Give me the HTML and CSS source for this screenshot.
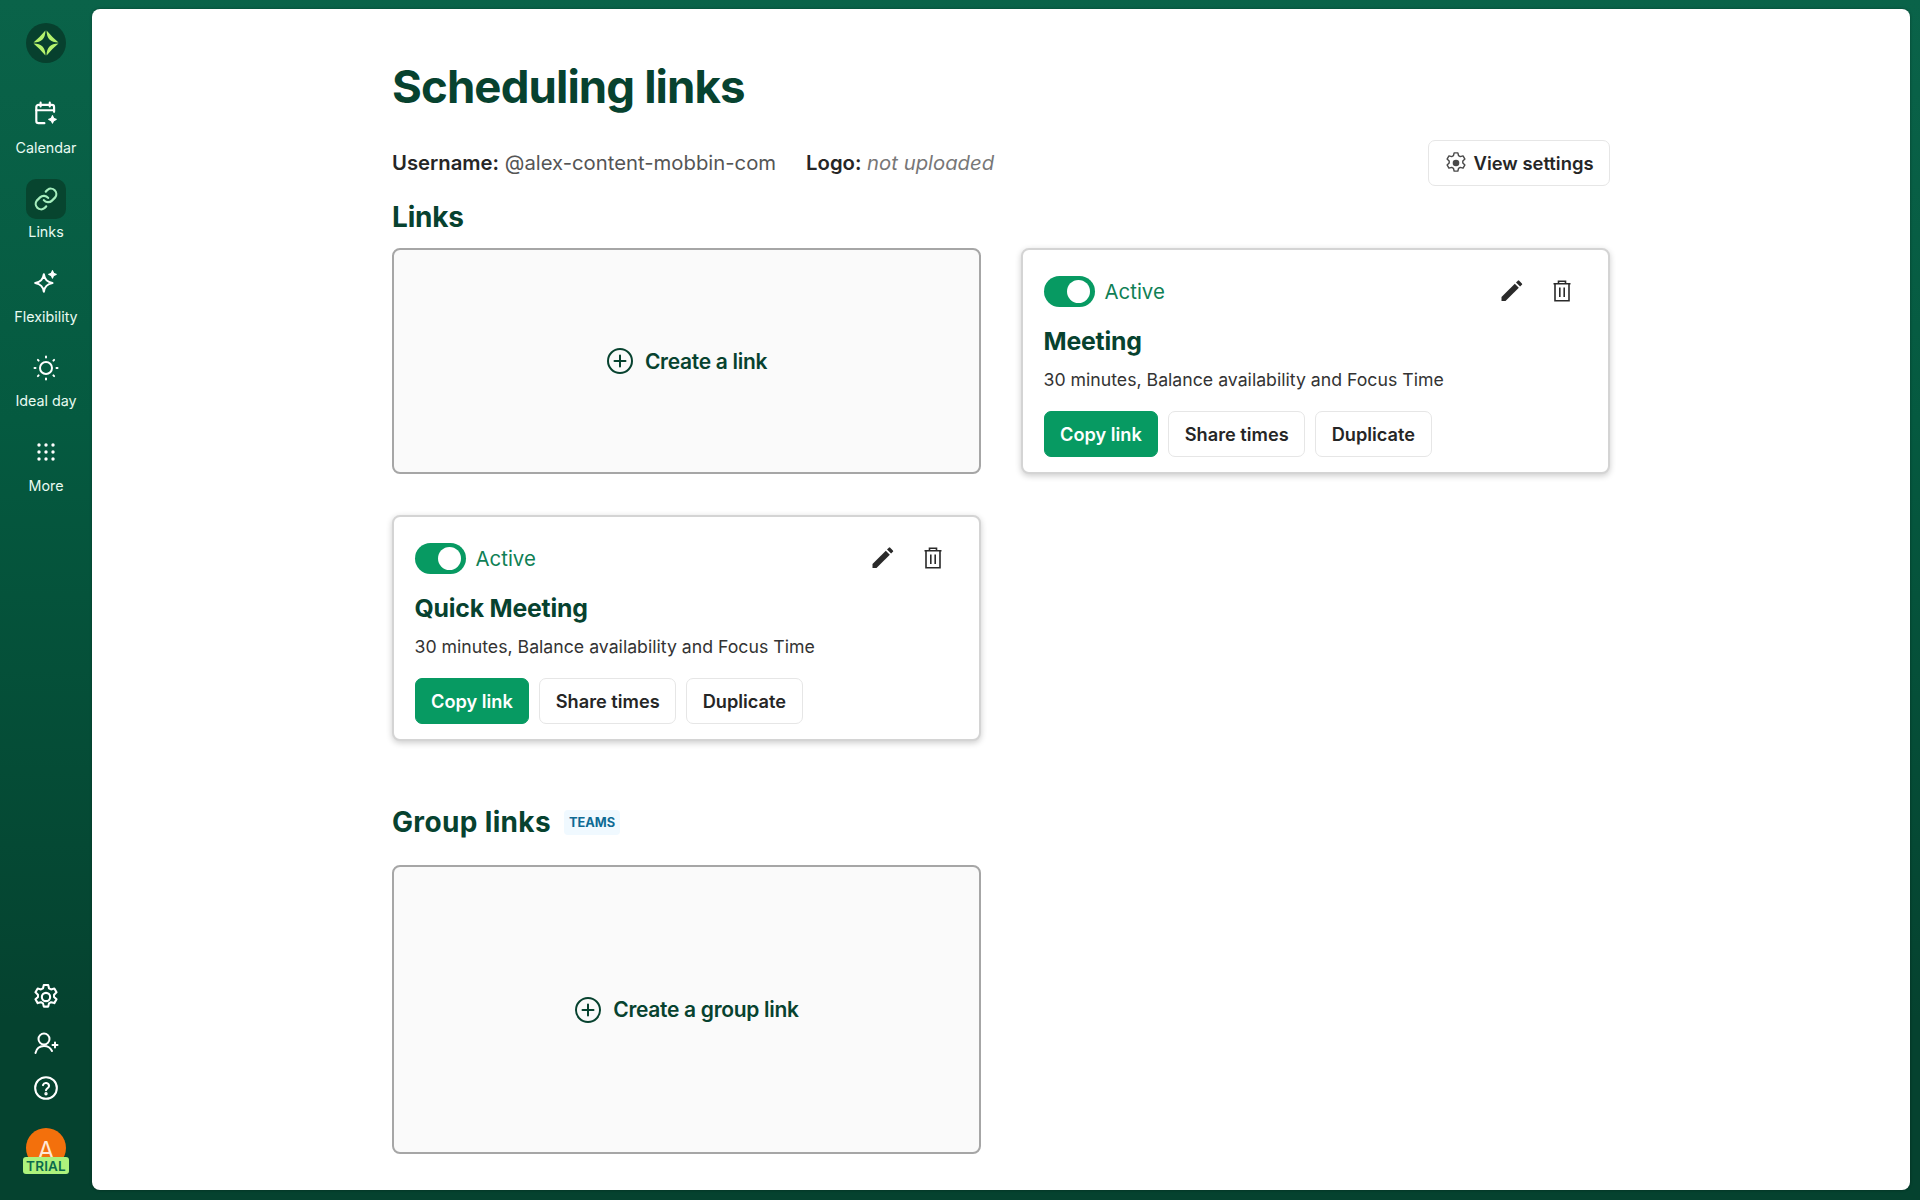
FILE: index.html
```html
<!DOCTYPE html>
<html>
<head>
<title>Scheduling links</title>
<link rel="stylesheet" href="styles.css">
</head>
<body>
<div class="app">
  <nav class="sidebar">
    <div class="logo">
      <svg width="28" height="28" viewBox="0 0 28 28" fill="#b5f26d">
        <path d="M14.600 1.500Q20 8 26.500 13.400Q14.500 13.500 14.600 1.500z"/>
        <path d="M14.600 1.500Q20 8 26.500 13.400Q14.500 13.500 14.600 1.500z" transform="rotate(90 14 14)"/>
        <path d="M14.600 1.500Q20 8 26.500 13.400Q14.500 13.500 14.600 1.500z" transform="rotate(180 14 14)"/>
        <path d="M14.600 1.500Q20 8 26.500 13.400Q14.500 13.500 14.600 1.500z" transform="rotate(270 14 14)"/>
      </svg>
    </div>
    <a class="nav-item">
      <span class="nav-icon">
        <svg width="28" height="28" viewBox="0 0 26 26" fill="none" stroke="#fff" stroke-width="2" stroke-linecap="round" stroke-linejoin="round"><path d="M11.500 21.500H6a2 2 0 0 1-2-2V6.500a2 2 0 0 1 2-2h12.500a2 2 0 0 1 2 2v4.500"/><path d="M4 9.500h16.500M8 2.500v3.500M16.500 2.500v3.500"/><path d="M19 14.500c.3 2.200 1 3 3.500 3.500-2.500.5-3.200 1.300-3.500 3.500-.3-2.200-1-3-3.500-3.500 2.500-.5 3.200-1.300 3.500-3.500z" fill="#fff" stroke-width="1"/></svg>
      </span>
      <span class="nav-label">Calendar</span>
    </a>
    <a class="nav-item">
      <span class="nav-icon nav-icon-active">
        <svg width="26" height="26" viewBox="0 0 24 24" fill="none" stroke="#a5eebd" stroke-width="2" stroke-linecap="round" stroke-linejoin="round"><path d="M10 13a5 5 0 0 0 7.500.5l3-3a5 5 0 0 0-7-7l-1.700 1.700"/><path d="M14 11a5 5 0 0 0-7.500-.5l-3 3a5 5 0 0 0 7 7l1.700-1.700"/></svg>
      </span>
      <span class="nav-label">Links</span>
    </a>
    <a class="nav-item">
      <span class="nav-icon">
        <svg width="28" height="28" viewBox="0 0 26 26" fill="none" stroke="#fff" stroke-width="2" stroke-linejoin="round"><path d="M11 5c.8 5 2.800 7 8 8-5.200 1-7.200 3-8 8-.8-5-2.800-7-8-8 5.200-1 7.200-3 8-8z"/><path d="M19 1.500c.3 2.200 1.200 3.100 3.500 3.500-2.300.4-3.200 1.300-3.500 3.500-.3-2.200-1.200-3.100-3.500-3.500 2.300-.4 3.200-1.300 3.500-3.500z" fill="#fff" stroke-width="1"/></svg>
      </span>
      <span class="nav-label">Flexibility</span>
    </a>
    <a class="nav-item">
      <span class="nav-icon">
        <svg width="26" height="26" viewBox="0 0 26 26" fill="none" stroke="#fff" stroke-width="2" stroke-linecap="round"><circle cx="13" cy="13" r="6"/><path d="M13 1.500v1M13 23.500v1M1.500 13h1M23.500 13h1M4.900 4.900l.7.7M20.400 20.400l.7.700M4.900 21.100l.7-.7M20.400 5.600l.7-.7"/></svg>
      </span>
      <span class="nav-label">Ideal day</span>
    </a>
    <a class="nav-item">
      <span class="nav-icon">
        <svg width="26" height="26" viewBox="0 0 26 26" fill="#fff"><circle cx="6" cy="6" r="1.700"/><circle cx="13" cy="6" r="1.700"/><circle cx="20" cy="6" r="1.700"/><circle cx="6" cy="13" r="1.700"/><circle cx="13" cy="13" r="1.700"/><circle cx="20" cy="13" r="1.700"/><circle cx="6" cy="20" r="1.700"/><circle cx="13" cy="20" r="1.700"/><circle cx="20" cy="20" r="1.700"/></svg>
      </span>
      <span class="nav-label">More</span>
    </a>

    <div class="sidebar-bottom">
      <svg width="26" height="26" viewBox="2 2 20 20" fill="none" stroke="#fff" stroke-width="1.600" stroke-linejoin="round"><path d="M10.300 2.800h3.400l.6 2.500 1.600.9 2.500-.7 1.700 2.900-1.900 1.800v1.800l1.900 1.800-1.700 2.900-2.500-.7-1.600.9-.6 2.500h-3.400l-.6-2.500-1.600-.9-2.500.7-1.700-2.900 1.900-1.800v-1.800l-1.900-1.800 1.700-2.900 2.500.7 1.600-.9z"/><circle cx="12" cy="12" r="3.200"/></svg>
      <svg width="26" height="26" viewBox="0 0 26 26" fill="none" stroke="#fff" stroke-width="2" stroke-linecap="round"><circle cx="11" cy="9" r="5.500"/><path d="M2.500 23c1-4.500 4.500-7 8.500-7s6.500 1.800 8 5M22 12.500v5M19.500 15h5"/></svg>
      <svg width="26" height="26" viewBox="0 0 24 24" fill="none" stroke="#fff" stroke-width="1.900" stroke-linecap="round"><circle cx="12" cy="12" r="10"/><path d="M9.200 9.300a2.900 2.900 0 0 1 5.600.8c0 1.900-2.800 2.300-2.800 4"/><circle cx="12" cy="17.300" r=".6" fill="#fff"/></svg>
      <div class="avatar">
        <span class="avatar-letter">A</span>
        <span class="trial">TRIAL</span>
      </div>
    </div>
  </nav>

  <main class="panel">
    <div class="content">
      <h1>Scheduling links</h1>
      <div class="meta">
        <div class="meta-text">
          <span><b>Username:</b> <span class="muted">@alex-content-mobbin-com</span></span>
          <span><b>Logo:</b> <i class="faint">not uploaded</i></span>
        </div>
        <button class="btn settings-btn">
          <svg width="22" height="22" viewBox="2 2 20 20" fill="none" stroke="#4a4a4a" stroke-width="1.300" stroke-linejoin="round"><path d="M10.300 2.800h3.400l.6 2.500 1.600.9 2.500-.7 1.700 2.900-1.900 1.800v1.800l1.900 1.800-1.700 2.900-2.500-.7-1.600.9-.6 2.500h-3.400l-.6-2.500-1.600-.9-2.500.7-1.700-2.900 1.900-1.800v-1.800l-1.900-1.800 1.700-2.900 2.500.7 1.600-.9z"/><circle cx="12" cy="12" r="3" fill="#4a4a4a" stroke="none"/></svg>
          View settings
        </button>
      </div>

      <h2>Links</h2>
      <div class="card-grid">
        <a class="card create-card">
          <svg width="28" height="28" viewBox="0 0 28 28" fill="none" stroke="#07422f" stroke-width="2" stroke-linecap="round"><circle cx="14" cy="14" r="12"/><path d="M14 8.500v11M8.500 14h11"/></svg>
          Create a link
        </a>

        <div class="card link-card">
          <div class="card-top">
            <span class="toggle"></span>
            <span class="active-label">Active</span>
            <div class="card-actions">
              <svg width="26" height="26" viewBox="0 0 26 26" fill="#2a2a2a"><path d="M3.500 23v-4L16.800 5.800l4 4L7.500 23z"/><path d="M18 4.500l1.800-1.800a1 1 0 0 1 1.400 0l2.700 2.700a1 1 0 0 1 0 1.400L22.100 8.600z"/></svg>
              <svg width="26" height="26" viewBox="0 0 26 26" fill="none" stroke="#2a2a2a" stroke-width="1.600"><path d="M4.500 5.800h17M6 5.800v17h14v-17M9.500 5.500V3.200h7v2.300M10.800 9.500v9.500M15.200 9.500v9.500"/></svg>
            </div>
          </div>
          <h3>Meeting</h3>
          <p>30 minutes, Balance availability and Focus Time</p>
          <div class="card-buttons">
            <button class="btn btn-primary">Copy link</button>
            <button class="btn">Share times</button>
            <button class="btn">Duplicate</button>
          </div>
        </div>

        <div class="card link-card">
          <div class="card-top">
            <span class="toggle"></span>
            <span class="active-label">Active</span>
            <div class="card-actions">
              <svg width="26" height="26" viewBox="0 0 26 26" fill="#2a2a2a"><path d="M3.500 23v-4L16.800 5.800l4 4L7.500 23z"/><path d="M18 4.500l1.800-1.800a1 1 0 0 1 1.400 0l2.700 2.700a1 1 0 0 1 0 1.400L22.100 8.600z"/></svg>
              <svg width="26" height="26" viewBox="0 0 26 26" fill="none" stroke="#2a2a2a" stroke-width="1.600"><path d="M4.500 5.800h17M6 5.800v17h14v-17M9.500 5.500V3.200h7v2.300M10.800 9.500v9.500M15.200 9.500v9.500"/></svg>
            </div>
          </div>
          <h3>Quick Meeting</h3>
          <p>30 minutes, Balance availability and Focus Time</p>
          <div class="card-buttons">
            <button class="btn btn-primary">Copy link</button>
            <button class="btn">Share times</button>
            <button class="btn">Duplicate</button>
          </div>
        </div>
      </div>

      <div class="group-head">
        <h2>Group links</h2>
        <span class="badge">TEAMS</span>
      </div>
      <div class="card-grid">
        <a class="card create-card group-card">
          <svg width="28" height="28" viewBox="0 0 28 28" fill="none" stroke="#07422f" stroke-width="2" stroke-linecap="round"><circle cx="14" cy="14" r="12"/><path d="M14 8.500v11M8.500 14h11"/></svg>
          Create a group link
        </a>
      </div>
    </div>
  </main>
</div>
</body>
</html>
```

FILE: styles.css
```css
* {
  box-sizing: border-box;
}

html, body {
  margin: 0;
  height: 100%;
}

body {
  font-family: Inter, "Liberation Sans", sans-serif;
  color: #262626;
  background: #fff;
}

.app {
  display: flex;
  height: 1200px;
  padding: 9px 10px 10px 0;
  background: linear-gradient(180deg, #0a6349 0%, #055a40 35%, #05422f 85%);
  overflow: hidden;
}

/* sidebar */
.sidebar {
  width: 92px;
  flex: none;
  display: flex;
  flex-direction: column;
  align-items: center;
  padding-top: 14px;
}

.logo {
  width: 40px;
  height: 40px;
  border-radius: 50%;
  background: #07402e;
  display: flex;
  align-items: center;
  justify-content: center;
  margin-bottom: 31px;
}

.nav-item {
  display: flex;
  flex-direction: column;
  align-items: center;
  height: 84.500px;
}

.nav-icon {
  width: 40px;
  height: 40px;
  border-radius: 10px;
  display: flex;
  align-items: center;
  justify-content: center;
}

.nav-icon-active {
  background: #07452f;
}

.nav-label {
  font-size: 14.300px;
  line-height: 17px;
  margin-top: 4.500px;
  color: #e9fbf2;
}

.sidebar-bottom {
  margin-top: auto;
  display: flex;
  flex-direction: column;
  align-items: center;
  gap: 19.500px;
  padding-bottom: 22px;
}

.avatar {
  position: relative;
  width: 40px;
  height: 40px;
  border-radius: 50%;
  background: #f3700c;
  margin-top: 7.500px;
  text-align: center;
}

.avatar-letter {
  color: #ffe9d6;
  font-size: 24px;
  line-height: 46px;
}

.trial {
  position: absolute;
  left: -3px;
  bottom: -6px;
  width: 46px;
  height: 17px;
  border-radius: 3px;
  background: #adf27c;
  color: #0a6a4c;
  font-size: 13.500px;
  line-height: 18px;
  font-weight: 600;
  letter-spacing: 0.2px;
}

/* main panel */
.panel {
  flex: 1;
  background: #fff;
  border-radius: 8px;
  box-shadow: 0 0 3px rgba(0, 0, 0, 0.35);
}

.content {
  width: 1218px;
  margin-left: 300px;
  padding-top: 50px;
}

h1 {
  margin: 0;
  font-size: 45.600px;
  line-height: 56px;
  font-weight: 700;
  letter-spacing: -0.9px;
  color: #07422f;
}

.meta {
  display: flex;
  justify-content: space-between;
  align-items: center;
  margin-top: 25px;
  height: 46px;
}

.meta-text {
  display: flex;
  gap: 30px;
  font-size: 20.300px;
  padding-bottom: 2px;
}

.meta-text b {
  font-weight: 600;
}

.muted {
  color: #555;
}

.faint {
  color: #777;
}

h2 {
  margin: 14px 0 14px;
  font-size: 28px;
  line-height: 34px;
  font-weight: 650;
  letter-spacing: -0.2px;
  color: #07422f;
}

.card-grid {
  display: grid;
  grid-template-columns: 589px 589px;
  gap: 41px 40px;
}

.card {
  height: 226px;
  border-radius: 8px;
  border: 2.500px solid #a6a6a6;
}

.create-card {
  display: flex;
  align-items: center;
  justify-content: center;
  gap: 11px;
  background: #fafafa;
  font-size: 21px;
  font-weight: 600;
  color: #07422f;
  letter-spacing: -0.3px;
}

.group-card {
  height: 289px;
}

.link-card {
  padding: 25px 20px 14px 20.500px;
  background: #fff;
  border-color: #d4d4d4;
  box-shadow: 0 2px 6px rgba(0, 0, 0, 0.2);
}

.card-top {
  display: flex;
  align-items: center;
  height: 32px;
}

.toggle {
  position: relative;
  width: 51px;
  height: 31px;
  border-radius: 16px;
  background: #079a62;
}

.toggle::after {
  content: "";
  position: absolute;
  right: 5px;
  top: 4px;
  width: 23px;
  height: 23px;
  border-radius: 50%;
  background: #fff;
}

.active-label {
  margin-left: 10px;
  font-size: 20.400px;
  color: #0f8055;
}

.card-actions {
  margin-left: auto;
  margin-right: 13px;
  display: flex;
  gap: 25px;
}

h3 {
  margin: 17px 0 0;
  font-size: 24.800px;
  line-height: 34px;
  font-weight: 700;
  letter-spacing: -0.2px;
  color: #07422f;
}

.link-card p {
  margin: 10px 0 0;
  font-size: 17.700px;
  line-height: 24px;
  color: #333;
}

.card-buttons {
  display: flex;
  gap: 10px;
  margin-top: 19px;
}

.btn {
  display: inline-flex;
  align-items: center;
  gap: 7px;
  height: 46px;
  padding: 0 15.500px;
  border: 1.500px solid #e6e6e6;
  border-radius: 7px;
  background: #fff;
  font-family: inherit;
  font-size: 18.200px;
  font-weight: 600;
  color: #262626;
}

.btn-primary {
  background: #079a62;
  border-color: #079a62;
  color: #fff;
}

.settings-btn {
  padding: 0 15.500px;
  font-size: 18.400px;
}

.group-head {
  display: flex;
  align-items: center;
  gap: 13px;
  margin-top: 50px;
  margin-bottom: 12px;
}

.group-head h2 {
  letter-spacing: 0.35px;
}

.badge {
  margin-top: 1px;
  padding: 5px;
  border-radius: 4px;
  background: #f0f9ff;
  color: #0e6a94;
  font-size: 12.800px;
  line-height: 15px;
  font-weight: 700;
}
```
